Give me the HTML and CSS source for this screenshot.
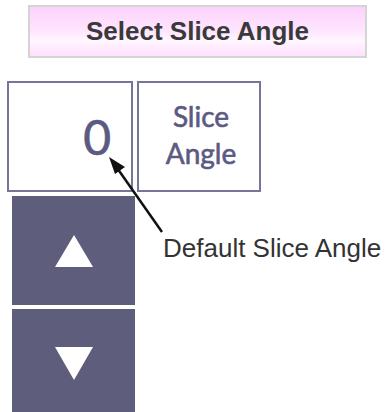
FILE: index.html
```html
<!DOCTYPE html>
<html lang="en">
<head>
    <meta charset="UTF-8">
    <meta name="viewport" content="width=device-width, initial-scale=1.0">
    <title>Select Slice Angle</title>
    <link rel="stylesheet" href="styles.css">
</head>
<body>

    <div id="slice-screen">
        <div class="title-bar">Select Slice Angle</div>

        <div class="angle-row">
            <div class="angle-value">0</div>
            <div class="angle-label">Slice<br>Angle</div>
        </div>

        <div class="step-buttons">
            <button class="step-button" aria-label="Increase">
                <svg width="38" height="32" viewBox="0 0 38 32"><polygon points="19,0 38,32 0,32" fill="#fff"/></svg>
            </button>
            <button class="step-button" aria-label="Decrease">
                <svg width="38" height="33" viewBox="0 0 38 33"><polygon points="0,0 38,0 19,33" fill="#fff"/></svg>
            </button>
        </div>

        <!-- callout pointing at the value -->
        <svg class="callout-arrow" width="70" height="80" viewBox="0 0 70 80">
            <line x1="57" y1="77" x2="10" y2="10" stroke="#111" stroke-width="2.5"/>
            <polygon points="4,2 20,12 10,19" fill="#111"/>
        </svg>
        <div class="callout-text">Default Slice Angle</div>
    </div>

</body>
</html>
```
FILE: styles.css
```css
body {
    margin: 0;
    padding: 0;
    background-color: #fff;
    font-family: 'Liberation Sans', Arial, sans-serif;
}

#slice-screen {
    position: relative;
    width: 390px;
    height: 412px;
    overflow: hidden;
}

.title-bar {
    box-sizing: border-box;
    margin: 5px 0 0 28px;
    width: 339px;
    height: 53px;
    border: 2px solid #d4d4d4;
    background: linear-gradient(#fcd2fa, #ffe6ff 50%, #fff6ff 68%, #ffe0fd);
    color: #3a3a3a;
    font-weight: bold;
    font-size: 26px;
    line-height: 48px;
    text-align: center;
}

.angle-row {
    display: flex;
    gap: 4px;
    margin: 23px 0 0 7px;
}

.angle-value,
.angle-label {
    box-sizing: border-box;
    height: 111px;
    border: 2px solid #77769a;
    color: #5b5a82;
    font-family: Lato, 'Open Sans', sans-serif;
    -webkit-text-stroke: 0.6px #5b5a82;
}

.angle-value {
    width: 126px;
    padding-right: 20px;
    text-align: right;
    font-size: 48px;
    line-height: 107px;
}

.angle-label {
    width: 124px;
    display: flex;
    align-items: center;
    justify-content: center;
    padding: 0 0 3px 4px;
    font-size: 28px;
    line-height: 37px;
    text-align: center;
}

.step-buttons {
    display: flex;
    flex-direction: column;
    gap: 4px;
    margin: 4px 0 0 12px;
    width: 123px;
}

.step-button {
    display: flex;
    align-items: center;
    justify-content: center;
    height: 109px;
    padding: 0;
    border: none;
    background-color: #5f5d7c;
    cursor: pointer;
}

.callout-arrow {
    position: absolute;
    left: 105px;
    top: 155px;
}

.callout-text {
    position: absolute;
    left: 163px;
    top: 233px;
    color: #333;
    font-size: 26px;
    line-height: 30px;
    white-space: nowrap;
}
```
